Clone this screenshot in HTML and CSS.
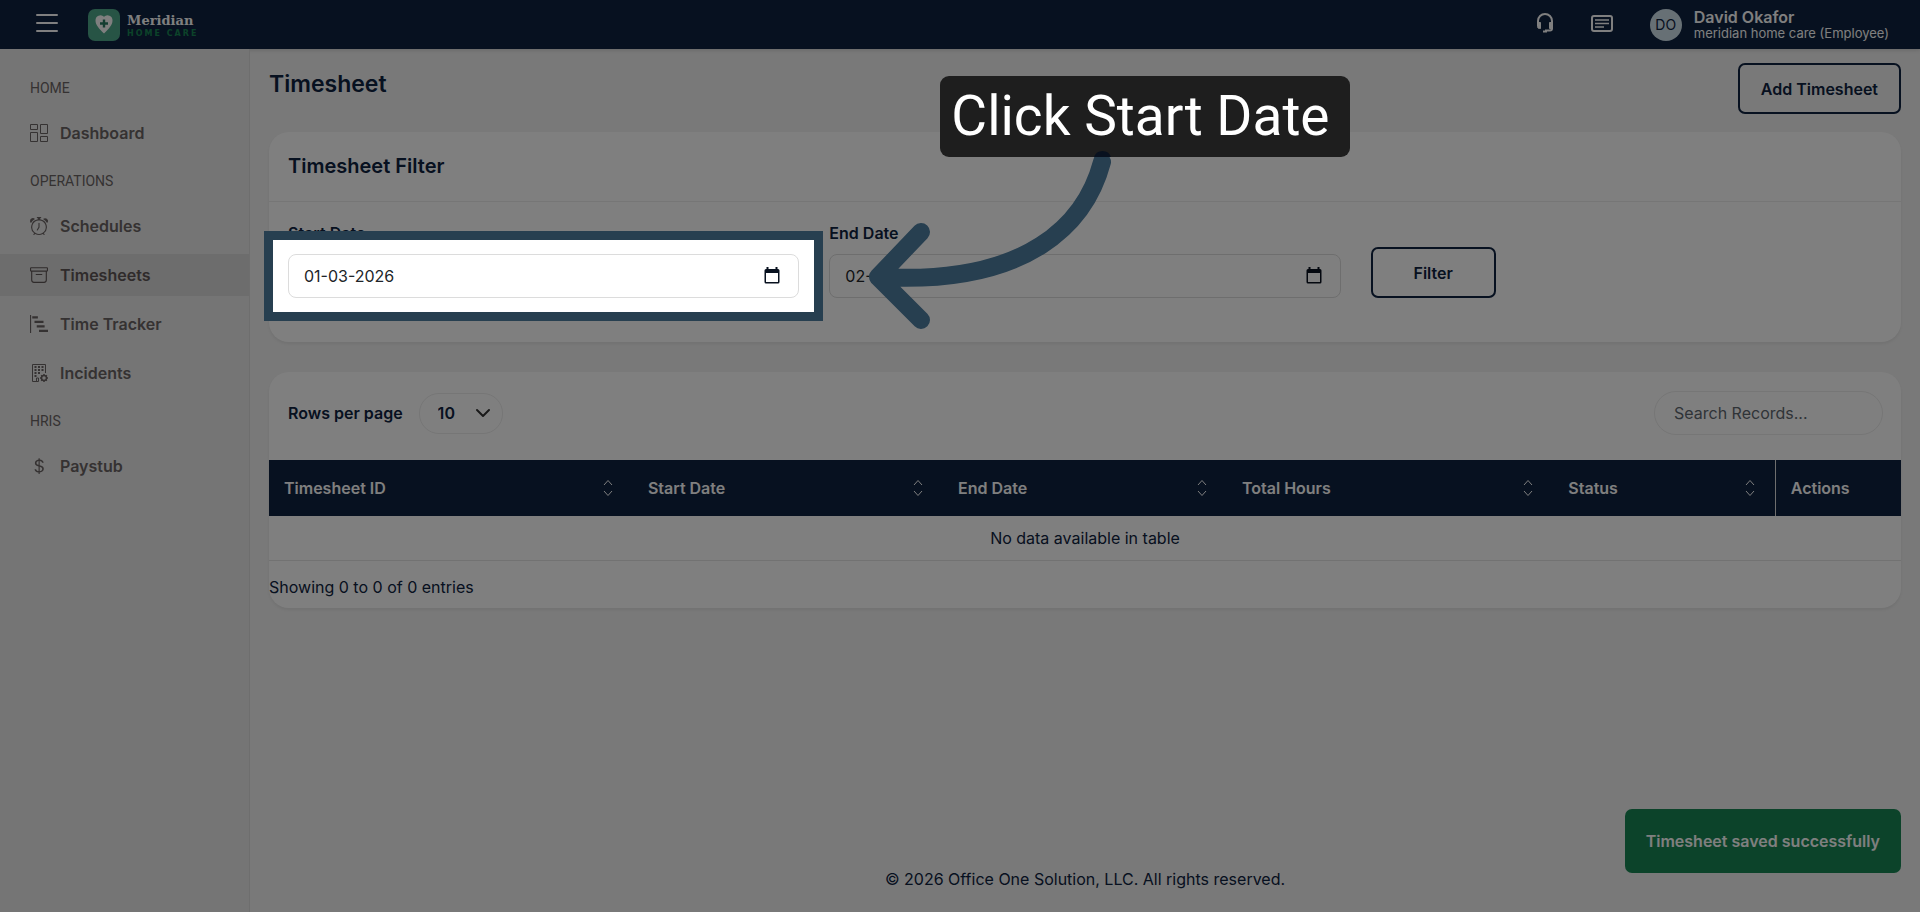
FILE: index.html
```html
<!DOCTYPE html>
<html lang="en">
<head>
<meta charset="utf-8">
<meta name="viewport" content="width=device-width, initial-scale=1">
<title>Timesheet</title>
<link rel="stylesheet" href="styles.css">
</head>
<body>
<header class="topbar">
  <button class="icon-btn menu-btn" type="button" aria-label="Toggle menu">
    <svg width="22" height="20" viewBox="0 0 22 20" fill="none" stroke="currentColor" stroke-width="2" stroke-linecap="round"><path d="M1 2h20M1 10h20M1 18h20"/></svg>
  </button>
  <a class="brand" href="#">
    <svg width="32" height="32" viewBox="0 0 32 32"><rect width="32" height="32" rx="7" fill="#4fa88a"/><path d="M16 24.500C11 19.500 7.500 16 7.500 11.500A5 5 0 0 1 16 7.800A5 5 0 0 1 24.500 11.500C24.500 16 21 19.500 16 24.500z" fill="#fff"/><path d="M16 10.500v8M12 14.500h8" stroke="#2a7a62" stroke-width="2.400"/></svg>
    <span class="brand-text"><span class="brand-name">Meridian</span><span class="brand-sub">HOME CARE</span></span>
  </a>
  <div class="topbar-right">
    <button class="icon-btn" type="button" aria-label="Support">
      <svg width="18" height="20" viewBox="0 0 18 20" fill="none" stroke="currentColor" stroke-width="2"><path d="M2 11V8a7 7 0 0 1 14 0v7.500q0 2-2 2H9"/><path d="M1.500 9.500h3v6h-1q-2 0-2-2zM16.500 9.500h-3v6h3z" fill="currentColor" stroke-width="1"/><path d="M7 18.500h4"/></svg>
    </button>
    <button class="icon-btn" type="button" aria-label="News">
      <svg width="22" height="18" viewBox="0 0 22 18" fill="none" stroke="currentColor" stroke-width="2"><rect x="1" y="2" width="20" height="15" rx="2"/><path d="M4 6h14M4 9.500h14M4 13h9" stroke-width="1.600"/></svg>
    </button>
    <div class="user">
      <span class="avatar">DO</span>
      <span class="user-text"><span class="user-name">David Okafor</span><span class="user-org">meridian home care (Employee)</span></span>
    </div>
  </div>
</header>
<div class="shell">
  <nav class="sidebar" aria-label="Main">
    <h2 class="nav-label">HOME</h2>
    <a class="nav-item" href="#"><svg class="nav-icon" viewBox="0 0 18 18" fill="none" stroke="currentColor"><path d="M.500.500h7v5h-7zM10.500.500h7v9h-7zM.500 8.500h7v9h-7zM10.500 12.500h7v5h-7z"/></svg>Dashboard</a>
    <h2 class="nav-label">OPERATIONS</h2>
    <a class="nav-item" href="#"><svg class="nav-icon" viewBox="0 0 16 16" fill="currentColor"><path d="M8.500 5.500a.5.500 0 0 0-1 0v3.362l-1.429 2.380a.5.500 0 1 0 .858.515l1.500-2.500A.5.500 0 0 0 8.500 9z"/><path d="M6.500 0a.5.500 0 0 0 0 1H7v1.070a7.001 7.001 0 0 0-3.273 12.474l-.602.602a.5.500 0 0 0 .707.708l.746-.746A6.970 6.970 0 0 0 8 16a6.970 6.970 0 0 0 3.422-.892l.746.746a.5.500 0 0 0 .707-.708l-.601-.602A7.001 7.001 0 0 0 9 2.070V1h.5a.5.500 0 0 0 0-1zm1.038 3.018a6 6 0 0 1 .924 0 6 6 0 1 1-.924 0M0 3.500c0 .753.333 1.429.860 1.887A8.040 8.040 0 0 1 4.387 1.860 2.500 2.500 0 0 0 0 3.500M13.500 1c-.753 0-1.429.333-1.887.860a8.040 8.040 0 0 1 3.527 3.527A2.500 2.500 0 0 0 13.500 1"/></svg>Schedules</a>
    <a class="nav-item active" href="#" aria-current="page"><svg class="nav-icon" viewBox="0 0 16 16" fill="currentColor"><path d="M0 2a1 1 0 0 1 1-1h14a1 1 0 0 1 1 1v2a1 1 0 0 1-1 1v7.500a2.500 2.500 0 0 1-2.500 2.500h-9A2.500 2.500 0 0 1 1 12.500V5a1 1 0 0 1-1-1zm2 3v7.500A1.500 1.500 0 0 0 3.500 14h9a1.500 1.500 0 0 0 1.500-1.500V5zm13-3H1v2h14zM5 7.500a.5.500 0 0 1 .5-.5h5a.5.500 0 0 1 0 1h-5a.5.500 0 0 1-.5-.5"/></svg>Timesheets</a>
    <a class="nav-item" href="#"><svg class="nav-icon" viewBox="0 0 16 16" fill="currentColor"><path d="M0 0h1v16H0zM2 1h5v2H2zM4 5h8v2H4zM6 9h7v2H6zM8 13h8v2H8z"/></svg>Time Tracker</a>
    <a class="nav-item" href="#"><svg class="nav-icon" viewBox="0 0 18 18" fill="none" stroke="currentColor"><path d="M15.500 9V.500h-13v17h6v-3.500h-2v3.500"/><path d="M4.500 3h2M8 3h2M11.500 3h2M4.500 6h2M8 6h2M11.500 6h2M4.500 9h2M8 9h2M4.500 12h2" stroke-width="2"/><circle cx="14" cy="14" r="2.500" stroke-width="1.500"/><path d="M14 10v1.500M14 16.500V18M10 14h1.500M16.500 14H18M11.200 11.200l1 1M15.800 15.800l1 1M16.800 11.200l-1 1M12.200 15.800l-1 1" stroke-width="1.500"/></svg>Incidents</a>
    <h2 class="nav-label">HRIS</h2>
    <a class="nav-item" href="#"><svg class="nav-icon" viewBox="0 0 16 16" fill="currentColor"><path d="M4 10.781c.148 1.667 1.513 2.850 3.591 3.003V15h1.043v-1.216c2.270-.179 3.678-1.438 3.678-3.300 0-1.590-.947-2.510-2.956-3.028l-.722-.187V3.467c1.122.110 1.879.714 2.070 1.616h1.470c-.166-1.600-1.540-2.748-3.540-2.875V1H7.591v1.233c-1.939.230-3.270 1.472-3.270 3.156 0 1.454.966 2.483 2.661 2.917l.610.162v4.031c-1.149-.170-1.940-.800-2.131-1.718zm3.391-3.836c-1.043-.263-1.600-.825-1.600-1.616 0-.944.704-1.641 1.800-1.828v3.495zm1.591 1.872c1.287.323 1.852.859 1.852 1.769 0 1.097-.826 1.828-2.200 1.939V8.730z"/></svg>Paystub</a>
  </nav>
  <main class="main">
    <div class="page-head">
      <h1 class="page-title">Timesheet</h1>
      <button class="btn" type="button">Add Timesheet</button>
    </div>
    <section class="card filter-card">
      <h2 class="card-title">Timesheet Filter</h2>
      <form class="filter-form">
        <div class="field">
          <label for="start">Start Date</label>
          <div class="date-box">
            <input id="start" class="date-input" type="text" value="01-03-2026">
            <button class="cal-btn" type="button" aria-label="Pick start date"><svg width="16" height="18" viewBox="0 0 16 18"><path d="M2.500 0h2v2h7V0h2v2H14a1.500 1.500 0 0 1 1.500 1.500V15a1.500 1.500 0 0 1-1.500 1.500H2A1.500 1.500 0 0 1 .500 15V3.500A1.500 1.500 0 0 1 2 2h.500zM2 6v9h12V6z" fill="currentColor" fill-rule="evenodd"/></svg></button>
            <div class="spotlight"></div>
            <p class="hint">Click Start Date</p>
            <svg class="arrow" width="250" height="190" viewBox="863 150 250 190" fill="none" stroke="#273f50" stroke-width="18" stroke-linecap="round" stroke-linejoin="round"><path d="M1102 162C1086 222 1030 286 878 277M921 232L878 277L921 320"/><path d="M1094 157a9 9 0 0 1 17 0z" fill="#08111f" stroke="none"/></svg>
          </div>
        </div>
        <div class="field">
          <label for="end">End Date</label>
          <div class="date-box">
            <input id="end" class="date-input" type="text" value="02-">
            <button class="cal-btn" type="button" aria-label="Pick end date"><svg width="16" height="18" viewBox="0 0 16 18"><path d="M2.500 0h2v2h7V0h2v2H14a1.500 1.500 0 0 1 1.500 1.500V15a1.500 1.500 0 0 1-1.500 1.500H2A1.500 1.500 0 0 1 .500 15V3.500A1.500 1.500 0 0 1 2 2h.500zM2 6v9h12V6z" fill="currentColor" fill-rule="evenodd"/></svg></button>
          </div>
        </div>
        <button class="btn filter-btn" type="button">Filter</button>
      </form>
    </section>
    <section class="card">
      <div class="table-tools">
        <label class="rows-label">Rows per page
          <select class="rows-select"><option>10</option><option>25</option><option>50</option></select>
          <svg class="rows-caret" width="16" height="10" viewBox="0 0 16 10" fill="none" stroke="#333" stroke-width="2" stroke-linecap="round" stroke-linejoin="round"><path d="M2 2l6 6 6-6"/></svg>
        </label>
        <input class="search" type="search" placeholder="Search Records..." aria-label="Search records">
      </div>
      <table class="records">
        <colgroup><col class="c-id"><col class="c-start"><col class="c-end"><col class="c-hours"><col class="c-status"><col class="c-actions"></colgroup>
        <thead>
          <tr>
            <th><div class="th">Timesheet ID<svg class="sort" viewBox="0 0 10 18"><path d="M1 6l4-4.500L9 6M1 12l4 4.500L9 12"/></svg></div></th>
            <th><div class="th">Start Date<svg class="sort" viewBox="0 0 10 18"><path d="M1 6l4-4.500L9 6M1 12l4 4.500L9 12"/></svg></div></th>
            <th><div class="th">End Date<svg class="sort" viewBox="0 0 10 18"><path d="M1 6l4-4.500L9 6M1 12l4 4.500L9 12"/></svg></div></th>
            <th><div class="th">Total Hours<svg class="sort" viewBox="0 0 10 18"><path d="M1 6l4-4.500L9 6M1 12l4 4.500L9 12"/></svg></div></th>
            <th><div class="th">Status<svg class="sort" viewBox="0 0 10 18"><path d="M1 6l4-4.500L9 6M1 12l4 4.500L9 12"/></svg></div></th>
            <th class="th-actions"><div class="th">Actions</div></th>
          </tr>
        </thead>
        <tbody><tr><td colspan="6">No data available in table</td></tr></tbody>
      </table>
      <p class="table-info">Showing 0 to 0 of 0 entries</p>
    </section>
    <footer class="footer">© 2026 Office One Solution, LLC. All rights reserved.</footer>
  </main>
</div>
<div class="toast" role="status">Timesheet saved successfully</div>
</body>
</html>
```

FILE: styles.css
```css
:root {
  --navy: #0e2240;
  --line: #ececec;
}

* {
  box-sizing: border-box;
}

body {
  margin: 0;
  min-height: 100vh;
  display: flex;
  flex-direction: column;
  background: #f2f2f2;
  color: var(--navy);
  font: 400 16px/24px Inter, "Liberation Sans", sans-serif;
}

h1, h2, p {
  margin: 0;
}

a {
  color: inherit;
  text-decoration: none;
}

button, input, select {
  font: inherit;
  color: inherit;
}

/* Top bar */
.topbar {
  display: flex;
  align-items: center;
  height: 49px;
  padding: 0 31px 0 36px;
  background: var(--navy);
  color: #fff;
  box-shadow: 0 1px 4px rgba(0, 0, 0, 0.15);
}

.icon-btn {
  display: flex;
  padding: 0 0 4px;
  border: 0;
  background: none;
}

.menu-btn {
  margin-right: 30px;
}

.brand {
  display: flex;
  align-items: center;
  gap: 7px;
}

.brand-text {
  display: flex;
  flex-direction: column;
  padding-top: 2px;
}

.brand-name {
  font: 700 13px/16px "DejaVu Serif", serif;
}

.brand-sub {
  color: #198754;
  font: 700 8px/10px "DejaVu Sans", sans-serif;
  letter-spacing: 2px;
}

.topbar-right {
  display: flex;
  align-items: center;
  gap: 37px;
  margin-left: auto;
}

.user {
  display: flex;
  align-items: center;
  gap: 12px;
}

.avatar {
  display: grid;
  place-items: center;
  width: 32px;
  height: 32px;
  border-radius: 50%;
  background: #cfe0ea;
  color: var(--navy);
  font-size: 14px;
}

.user-text {
  display: flex;
  flex-direction: column;
}

.user-name {
  font-weight: 600;
  line-height: 16px;
}

.user-org {
  font-size: 13px;
  line-height: 16px;
}

/* Sidebar */
.shell {
  display: flex;
  flex: 1;
}

.sidebar {
  flex: 0 0 250px;
  padding-top: 19px;
  border-right: 1px solid #dcdcdc;
  background: #ebebeb;
  color: #6b6464;
}

.nav-label {
  margin-bottom: 4px;
  padding-left: 30px;
  font: 400 14px/40px Roboto, sans-serif;
}

.nav-item {
  display: flex;
  align-items: center;
  gap: 12px;
  height: 42px;
  margin-bottom: 7px;
  padding-left: 30px;
  font-weight: 600;
}

.nav-item.active {
  background: #dadada;
  color: #5f5656;
}

.nav-icon {
  width: 18px;
  height: 18px;
}

/* Content */
.main {
  display: flex;
  flex: 1;
  flex-direction: column;
  min-width: 0;
  padding: 14px 19px 21px;
}

.page-head {
  display: flex;
  align-items: flex-start;
  justify-content: space-between;
  margin-bottom: 18px;
}

.page-title {
  padding-top: 5px;
  font-size: 23px;
  font-weight: 600;
  line-height: 32px;
}

.btn {
  height: 51px;
  padding: 0 21px;
  border: 2px solid var(--navy);
  border-radius: 7px;
  background: transparent;
  font-weight: 600;
}

.card {
  margin-bottom: 30px;
  border-radius: 20px;
  background: #fff;
  box-shadow: 0 2px 3px rgba(0, 0, 0, 0.06);
}

.card-title {
  padding: 20px 19px 21px;
  border-bottom: 1px solid var(--line);
  font-size: 20px;
  font-weight: 600;
  line-height: 28px;
}

.filter-form {
  display: grid;
  grid-template-columns: repeat(3, 1fr);
  gap: 30px;
  align-items: end;
  padding: 19px 19px 44px;
}

.field label {
  display: block;
  margin-bottom: 9px;
  font-weight: 600;
}

.date-box {
  position: relative;
  display: flex;
  align-items: center;
  height: 44px;
  border: 1px solid #dcdcdc;
  border-radius: 8px;
}

.date-input {
  flex: 1;
  min-width: 0;
  padding: 0 15px;
  border: 0;
  outline: 0;
  background: none;
  color: #212529;
}

.cal-btn {
  display: flex;
  padding: 0 18px 0 0;
  border: 0;
  background: none;
  color: #08111f;
}

.filter-btn {
  justify-self: start;
  width: 125px;
}

/* Walkthrough overlay: dims everything except the highlighted field */
.spotlight {
  position: absolute;
  z-index: 10;
  inset: -24px -25px;
  border: 9px solid #273f50;
  box-shadow: 0 0 0 9999px rgba(0, 0, 0, 0.5);
  pointer-events: none;
}

.hint {
  position: absolute;
  z-index: 11;
  top: -179px;
  left: calc(100% + 142px);
  padding: 4px 20px 5px 11px;
  border-radius: 9px;
  background: #1e1e1e;
  color: #fff;
  font: 400 55px/72px Roboto, sans-serif;
  white-space: nowrap;
}

.arrow {
  position: absolute;
  z-index: 12;
  top: -105px;
  left: calc(100% + 65px);
  pointer-events: none;
}

/* Table */
.table-tools {
  display: flex;
  align-items: center;
  justify-content: space-between;
  padding: 19px 18px 25px 19px;
}

.rows-label {
  position: relative;
  display: flex;
  align-items: center;
  gap: 16px;
  font-weight: 600;
}

.rows-select {
  width: 84px;
  height: 41px;
  padding: 0 18px;
  border: 1px solid var(--line);
  border-radius: 20px;
  background: none;
  appearance: none;
}

.rows-caret {
  position: absolute;
  right: 12px;
  pointer-events: none;
}

.search {
  width: 229px;
  height: 44px;
  padding: 0 19px;
  border: 1px solid var(--line);
  border-radius: 22px;
  background: none;
}

.search::placeholder {
  color: #5f6870;
}

.records {
  width: 100%;
  border-collapse: collapse;
  table-layout: fixed;
}

.c-id { width: 22.3%; }
.c-start { width: 19%; }
.c-end { width: 17.4%; }
.c-hours { width: 20%; }
.c-status { width: 13.6%; }
.c-actions { width: 7.7%; }

.records th {
  padding: 0 20px 0 15px;
  background: var(--navy);
  color: #fff;
  font-weight: 600;
  text-align: left;
}

.records .th-actions {
  border-left: 1px solid #dcdcdc;
}

.th {
  display: flex;
  align-items: center;
  justify-content: space-between;
  height: 56px;
}

.sort {
  width: 10px;
  height: 18px;
  fill: none;
  stroke: #fff;
}

.records td {
  height: 44px;
  padding: 0;
  border-bottom: 1px solid #e4e4e4;
  text-align: center;
}

.table-info {
  padding: 14px 0 9px;
}

.footer {
  margin-top: auto;
  text-align: center;
}

.toast {
  position: fixed;
  right: 19px;
  bottom: 39px;
  padding: 20px 21px;
  border-radius: 7px;
  background: #198754;
  color: #fff;
  font-weight: 600;
}
```
